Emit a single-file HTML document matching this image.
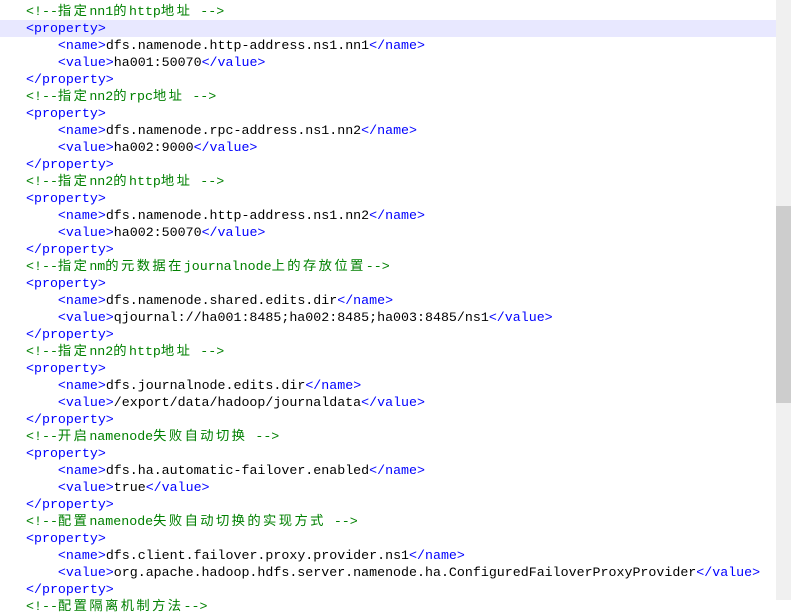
<!DOCTYPE html>
<html><head><meta charset="utf-8"><style>
body{margin:0;width:791px;height:600px;overflow:hidden;background:#fff;position:relative}
.code{position:absolute;left:26px;top:3px;font:13.3px/17px "Liberation Mono","Noto Sans CJK SC",monospace;color:#000}
.l{height:17px;white-space:pre;overflow:visible}
.c{color:#008000}.t{color:#0000ff}
b{font-weight:normal;letter-spacing:2.4px}
.hl{position:absolute;left:0;top:20px;width:776px;height:17px;background:#e8e8ff}
.sb{position:absolute;left:776px;top:0;width:15px;height:600px;background:#f0f0f0}
.th{position:absolute;left:776px;top:206px;width:15px;height:197px;background:#cdcdcd}
</style></head><body>
<div class="hl"></div>
<div class="sb"></div><div class="th"></div>
<div class="code"><div class="l c">&lt;!--<b>指定</b>nn1<b>的</b>http<b>地址</b> --&gt;</div><div class="l t">&lt;property&gt;</div><div class="l">    <span class="t">&lt;name&gt;</span>dfs.namenode.http-address.ns1.nn1<span class="t">&lt;/name&gt;</span></div><div class="l">    <span class="t">&lt;value&gt;</span>ha001:50070<span class="t">&lt;/value&gt;</span></div><div class="l t">&lt;/property&gt;</div><div class="l c">&lt;!--<b>指定</b>nn2<b>的</b>rpc<b>地址</b> --&gt;</div><div class="l t">&lt;property&gt;</div><div class="l">    <span class="t">&lt;name&gt;</span>dfs.namenode.rpc-address.ns1.nn2<span class="t">&lt;/name&gt;</span></div><div class="l">    <span class="t">&lt;value&gt;</span>ha002:9000<span class="t">&lt;/value&gt;</span></div><div class="l t">&lt;/property&gt;</div><div class="l c">&lt;!--<b>指定</b>nn2<b>的</b>http<b>地址</b> --&gt;</div><div class="l t">&lt;property&gt;</div><div class="l">    <span class="t">&lt;name&gt;</span>dfs.namenode.http-address.ns1.nn2<span class="t">&lt;/name&gt;</span></div><div class="l">    <span class="t">&lt;value&gt;</span>ha002:50070<span class="t">&lt;/value&gt;</span></div><div class="l t">&lt;/property&gt;</div><div class="l c">&lt;!--<b>指定</b>nm<b>的元数据在</b>journalnode<b>上的存放位置</b>--&gt;</div><div class="l t">&lt;property&gt;</div><div class="l">    <span class="t">&lt;name&gt;</span>dfs.namenode.shared.edits.dir<span class="t">&lt;/name&gt;</span></div><div class="l">    <span class="t">&lt;value&gt;</span>qjournal://ha001:8485;ha002:8485;ha003:8485/ns1<span class="t">&lt;/value&gt;</span></div><div class="l t">&lt;/property&gt;</div><div class="l c">&lt;!--<b>指定</b>nn2<b>的</b>http<b>地址</b> --&gt;</div><div class="l t">&lt;property&gt;</div><div class="l">    <span class="t">&lt;name&gt;</span>dfs.journalnode.edits.dir<span class="t">&lt;/name&gt;</span></div><div class="l">    <span class="t">&lt;value&gt;</span>/export/data/hadoop/journaldata<span class="t">&lt;/value&gt;</span></div><div class="l t">&lt;/property&gt;</div><div class="l c">&lt;!--<b>开启</b>namenode<b>失败自动切换</b> --&gt;</div><div class="l t">&lt;property&gt;</div><div class="l">    <span class="t">&lt;name&gt;</span>dfs.ha.automatic-failover.enabled<span class="t">&lt;/name&gt;</span></div><div class="l">    <span class="t">&lt;value&gt;</span>true<span class="t">&lt;/value&gt;</span></div><div class="l t">&lt;/property&gt;</div><div class="l c">&lt;!--<b>配置</b>namenode<b>失败自动切换的实现方式</b> --&gt;</div><div class="l t">&lt;property&gt;</div><div class="l">    <span class="t">&lt;name&gt;</span>dfs.client.failover.proxy.provider.ns1<span class="t">&lt;/name&gt;</span></div><div class="l">    <span class="t">&lt;value&gt;</span>org.apache.hadoop.hdfs.server.namenode.ha.ConfiguredFailoverProxyProvider<span class="t">&lt;/value&gt;</span></div><div class="l t">&lt;/property&gt;</div><div class="l c">&lt;!--<b>配置隔离机制方法</b>--&gt;</div></div>
</body></html>
